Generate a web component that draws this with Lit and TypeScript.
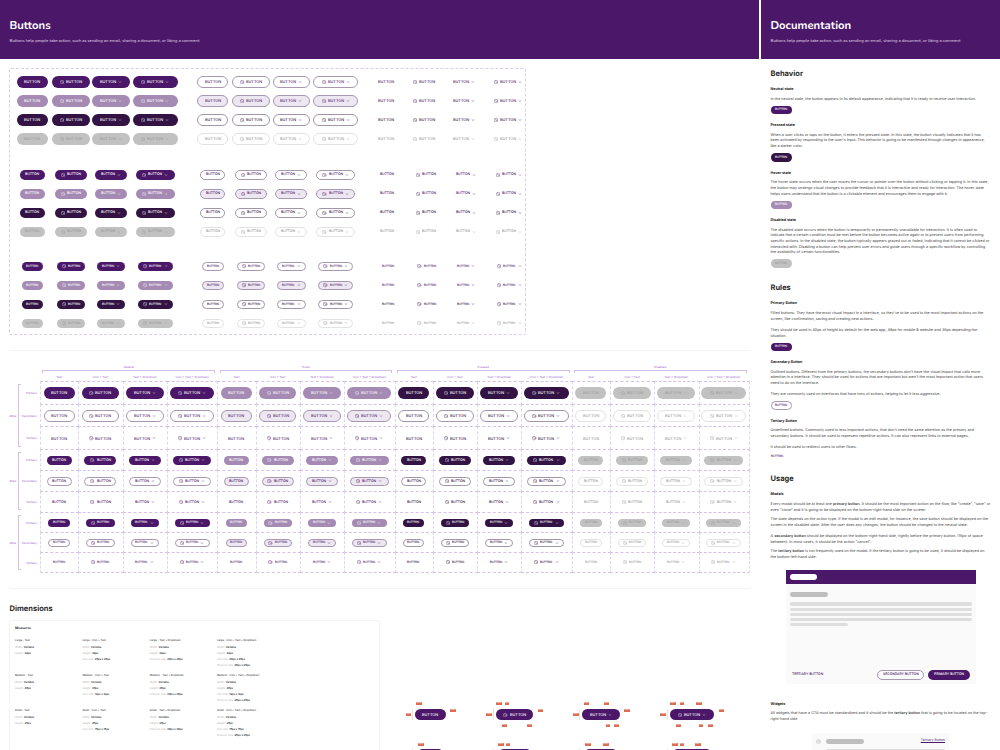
import {css, html, LitElement, nothing, svg} from 'lit';
import {customElement, property} from 'lit/decorators.js';
import {classMap} from 'lit/directives/class-map.js';

type Variant = 'primary' | 'secondary' | 'tertiary';
type Size = 'large' | 'medium' | 'small';
type State = 'neutral' | 'hover' | 'pressed' | 'disabled';

interface Kind {
  label: string;
  icon: boolean;
  chevron: boolean;
}

const VARIANTS: Variant[] = ['primary', 'secondary', 'tertiary'];
const SIZES: Size[] = ['large', 'medium', 'small'];
const STATES: State[] = ['neutral', 'hover', 'pressed', 'disabled'];
const KINDS: Kind[] = [
  {label: 'Text', icon: false, chevron: false},
  {label: 'Icon + Text', icon: true, chevron: false},
  {label: 'Text + Dropdown', icon: false, chevron: true},
  {label: 'Icon + Text + Dropdown', icon: true, chevron: true},
];
const HEIGHTS = {large: '48px', medium: '40px', small: '36px'};
const ICON_SIZES = {large: '20px', medium: '18px', small: '16px'};

const capitalize = (s: string) => s[0].toUpperCase() + s.slice(1);

@customElement('ds-button')
export class DsButton extends LitElement {
  static override styles = css`
    :host {
      display: inline-flex;
      vertical-align: top;
      flex: none;
    }

    .btn {
      display: flex;
      align-items: center;
      justify-content: center;
      box-sizing: border-box;
      border-radius: 6px;
      border: 0 solid transparent;
      font-family: Inter, 'Liberation Sans', sans-serif;
      font-weight: 500;
      line-height: 1;
      white-space: nowrap;
      color: #fff;
    }

    /* keeps the tiny capitals from being snapped to the pixel grid */
    .btn span {
      transform: rotate(0.02deg);
    }

    .large {
      width: 31px;
      height: 11.7px;
      font-size: 3.85px;
      gap: 1.9px;
    }
    .medium {
      width: 25.4px;
      height: 9.7px;
      font-size: 3.35px;
      gap: 2.1px;
    }
    .small {
      width: 21.6px;
      height: 8.7px;
      font-size: 2.95px;
      gap: 2px;
    }
    .large.one {
      width: 37.7px;
    }
    .medium.one {
      width: 32px;
    }
    .small.one {
      width: 28.2px;
    }
    .large.two {
      width: 44.4px;
    }
    .medium.two {
      width: 38.8px;
    }
    .small.two {
      width: 35px;
    }
    .btn.auto {
      width: auto;
      height: 10px;
      padding: 0 5.9px;
    }
    .btn.auto.secondary {
      padding: 0 5px;
    }
    .btn.flush {
      width: auto;
      height: 4.8px;
      padding: 0;
    }

    .primary {
      background: #4b1768;
    }
    .primary.hover {
      background: #a58bb4;
    }
    .primary.pressed {
      background: #321344;
    }
    .primary.disabled {
      background: #c1c1c1;
      color: #9c9c9c;
    }

    .secondary {
      border-width: 1px;
      border-color: #a797b2;
      color: #4b1768;
    }
    .secondary.hover {
      background: #ede7f1;
    }
    .secondary.pressed {
      border-color: #a096a8;
      color: #321344;
    }
    .secondary.disabled {
      border-color: #e2e2e2;
      color: #9a9a9a;
    }

    .tertiary {
      color: #4b1768;
    }
    .tertiary.pressed {
      color: #321344;
    }
    .tertiary.disabled {
      color: #9a9a9a;
    }

    svg {
      display: block;
      flex: none;
      width: 4.2px;
      height: 4.2px;
      fill: none;
      stroke: currentColor;
      stroke-width: 1.7;
      stroke-linecap: round;
      stroke-linejoin: round;
    }
  `;

  @property() variant: Variant = 'primary';
  @property() size: Size = 'large';
  @property() state: State = 'neutral';
  @property() label = 'BUTTON';
  @property({type: Boolean}) icon = false;
  @property({type: Boolean}) chevron = false;
  @property({type: Boolean}) auto = false;
  @property({type: Boolean}) flush = false;

  override render() {
    const extras = Number(this.icon) + Number(this.chevron);
    const classes = {
      btn: true,
      [this.variant]: true,
      [this.size]: true,
      [this.state]: true,
      one: extras === 1,
      two: extras === 2,
      auto: this.auto,
      flush: this.flush,
    };
    return html`<div class=${classMap(classes)}>
      ${this.icon
        ? html`<svg viewBox="0 0 20 20">
            ${svg`<circle cx="10" cy="10" r="8.8" /><path d="M9 5.5v5l4 2.6" />`}
          </svg>`
        : nothing}
      <span>${this.label}</span>
      ${this.chevron
        ? html`<svg viewBox="0 0 20 20">
            ${svg`<path d="M5 8.4l4.6 3.2 4.6-3.2" />`}
          </svg>`
        : nothing}
    </div>`;
  }
}

/** Every size, state and kind of button inside the dashed component frame. */
@customElement('variant-sheet')
export class VariantSheet extends LitElement {
  static override styles = css`
    :host {
      display: block;
    }
    .frame {
      box-sizing: border-box;
      width: 517.4px;
      height: 267px;
      margin-left: -0.5px;
      padding: 3px 0 0 4px;
      border: 1px dashed #dacdea;
      border-radius: 2px;
    }
    .block {
      display: flex;
    }
    .block + .block {
      margin-top: 17px;
    }
    .block + .block + .block {
      margin-top: 15.5px;
    }
    .group {
      display: grid;
      grid-template-columns: 37px 39.8px 40.8px 47.6px;
      grid-auto-rows: 19px;
      align-items: center;
      justify-items: center;
      margin-right: 15.1px;
    }
    .group.tertiary {
      grid-template-columns: 38px 38.6px 41.4px 47px;
      margin: 0 -20px 0 -7.9px;
    }
    .medium .group.tertiary {
      grid-template-columns: 38px 39.6px 39.4px 47.6px;
      margin-left: -6.2px;
    }
    .small .group.tertiary {
      grid-template-columns: 38px 39.4px 39.6px 47.4px;
      margin-left: -5.6px;
    }
  `;

  override render() {
    return html`<div class="frame">
      ${SIZES.map(
        (size) => html`<div class="block ${size}">
          ${VARIANTS.map(
            (variant) => html`<div class="group ${variant}">
              ${STATES.map((state) =>
                KINDS.map(
                  (kind) => html`<ds-button
                    .variant=${variant}
                    .size=${size}
                    .state=${state}
                    .icon=${kind.icon}
                    .chevron=${kind.chevron}
                  ></ds-button>`
                )
              )}
            </div>`
          )}
        </div>`
      )}
    </div>`;
  }
}

@customElement('state-matrix')
export class StateMatrix extends LitElement {
  static override styles = css`
    :host {
      display: flex;
      margin-left: -0.3px;
      font: 500 2.9px/4px Inter, 'Liberation Sans', sans-serif;
      color: #a56fd6;
    }
    .sizes {
      width: 31px;
      padding-top: 16.8px;
    }
    .size {
      display: flex;
      align-items: center;
      height: 67.9px;
    }
    .size.medium {
      height: 63px;
    }
    .size.small {
      height: 60px;
    }
    .name {
      width: 9px;
    }
    .brace {
      box-sizing: border-box;
      width: 3px;
      height: calc(100% - 5px);
      border: 1px solid #d3bde9;
      border-right: 0;
    }
    .variants {
      display: flex;
      flex-direction: column;
      flex: 1;
      height: 100%;
      text-align: right;
      padding-right: 3.4px;
    }
    .variants span {
      flex: 1;
      display: flex;
      align-items: center;
      justify-content: flex-end;
    }
    .states {
      display: grid;
      grid-template-columns: repeat(4, 177.2px);
      text-align: center;
    }
    .state {
      height: 15.9px;
      box-sizing: border-box;
      padding: 0 2.2px;
    }
    .span {
      box-sizing: border-box;
      height: 3px;
      margin: 1.4px 0 1.6px;
      border: 1px solid #d3bde9;
      border-bottom: 0;
    }
    .kinds,
    .cells {
      display: grid;
      grid-template-columns: 38.2px 44.3px 44.3px 50.4px;
    }
    .kinds {
      margin: 0 -2.2px;
    }
    .cells {
      grid-template-rows: repeat(3, 22.63px) repeat(3, 21px) repeat(3, 20px);
    }
    .cell {
      display: flex;
      align-items: center;
      justify-content: center;
      border-left: 1px dashed #e0d3ef;
      border-top: 1px dashed #d6c0e9;
      margin: 0 -1px -1px 0;
      padding-right: 2.2px;
    }
    .cell.last {
      border-right: 1px dashed #e0d3ef;
      padding-right: 1.2px;
    }
    .cell.bottom {
      border-bottom: 1px dashed #d6c0e9;
    }
  `;

  override render() {
    return html`
      <div class="sizes">
        ${SIZES.map(
          (size) => html`<div class="size ${size}">
            <span class="name">${HEIGHTS[size]}</span>
            <div class="brace"></div>
            <div class="variants">
              ${VARIANTS.map((v) => html`<span>${capitalize(v)}</span>`)}
            </div>
          </div>`
        )}
      </div>
      <div class="states">
        ${STATES.map(
          (state, s) => html`<div>
            <div class="state">
              ${capitalize(state)}
              <div class="span"></div>
              <div class="kinds">
                ${KINDS.map((kind) => html`<span>${kind.label}</span>`)}
              </div>
            </div>
            <div class="cells">
              ${SIZES.map((size) =>
                VARIANTS.map((variant) =>
                  KINDS.map(
                    (kind, k) => html`<div
                      class=${classMap({
                        cell: true,
                        last: s === 3 && k === 3,
                        bottom: size === 'small' && variant === 'tertiary',
                      })}
                    >
                      <ds-button
                        .variant=${variant}
                        .size=${size}
                        .state=${state}
                        .icon=${kind.icon}
                        .chevron=${kind.chevron}
                      ></ds-button>
                    </div>`
                  )
                )
              )}
            </div>
          </div>`
        )}
      </div>
    `;
  }
}

// Spacing tags around a specimen, as [x, y, width] from the button's corner.
type Tag = [number, number, number];

const SPECIMENS: {width: number; large: Tag[]; medium: Tag[]}[] = [
  {
    width: 80.7,
    large: [[1, -6.5, 5.6], [-9.3, 4.5, 5.6], [35.3, 0.4, 5.6]],
    medium: [[3, -5.6, 5.6], [32.5, 0.8, 5.6]],
  },
  {
    width: 86.6,
    large: [[0.3, -6.5, 5.6], [9.3, -6.5, 4.2], [-9.3, 4.5, 5.6], [42, 0.4, 5.6], [6, 15.6, 5.6], [31, 15.6, 5.6]],
    medium: [[2.3, -5.6, 5.6], [10, -5.6, 4.2], [39, 0.8, 5.6]],
  },
  {
    width: 87.4,
    large: [[1.3, -6.5, 5.3], [21.3, -6.5, 5.6], [-9.3, 4.5, 5.6], [42, 0.4, 5.6], [23.3, 15.6, 4.2], [31.6, 15.6, 5.6]],
    medium: [[3, -5.6, 5.6], [20.7, -5.6, 5.6], [39.3, 0.8, 5.6]],
  },
  {
    width: 60,
    large: [[0.3, -6.5, 5.6], [10, -6.5, 4.2], [26.6, -6.5, 5.6], [-9.3, 4.5, 5.6], [49, 0.4, 5.6], [6, 15.6, 5.6], [29.3, 15.6, 4.2], [38, 15.6, 5.6]],
    medium: [[2.3, -5.6, 5.6], [10, -5.6, 4.2], [25.3, -5.6, 5.6], [46, 0.8, 5.6]],
  },
];

@customElement('dimension-board')
export class DimensionBoard extends LitElement {
  static override styles = css`
    :host {
      display: flex;
      margin-left: -0.5px;
      font: 400 2.6px/6px Inter, 'Liberation Sans', sans-serif;
      color: #b4b4b4;
    }
    .measures {
      box-sizing: border-box;
      width: 371px;
      height: 160px;
      padding: 4.6px 0 0 5px;
      border: 1px solid #f3f3f3;
      border-radius: 2px;
    }
    .title {
      font-size: 3.3px;
      font-weight: 700;
      color: #333;
    }
    .specs {
      display: grid;
      grid-template-columns: 67.4px 67.4px 67.2px 80px;
      grid-auto-rows: 35.3px;
      margin-top: 5.3px;
    }
    .name {
      font-weight: 500;
      color: #444;
      margin-bottom: 0.9px;
    }
    b {
      font-weight: 600;
      color: #333;
    }
    .specimens {
      padding: 89px 0 0 35px;
    }
    .line {
      display: flex;
      height: 40px;
    }
    .line.medium ds-button {
      margin-left: 3px;
    }
    .specimen {
      position: relative;
    }
    .guide {
      position: absolute;
      left: -3px;
      top: 0;
      width: 1px;
      height: 11.7px;
      background: #f6dfd9;
    }
    .tag {
      position: absolute;
      height: 2.8px;
      background: #de6b50;
      border-radius: 0.5px;
      color: #fff;
      font-size: 2px;
      line-height: 2.8px;
      text-align: center;
    }
  `;

  private renderSpec(size: Size, kind: Kind) {
    const icon = ICON_SIZES[size];
    return html`<div>
      <div class="name">${capitalize(size)} - ${kind.label}</div>
      <div>Width: <b>Variable</b></div>
      <div>Height: <b>${HEIGHTS[size]}</b></div>
      ${kind.icon ? html`<div>Icon size: <b>${icon} x ${icon}</b></div>` : nothing}
      ${kind.chevron ? html`<div>Chevron size: <b>20px x 20px</b></div>` : nothing}
    </div>`;
  }

  private renderLine(size: 'large' | 'medium') {
    return html`<div class="line ${size}">
      ${SPECIMENS.map(
        (specimen, i) => html`<div
          class="specimen"
          style="width: ${specimen.width}px"
        >
          <div class="guide"></div>
          <ds-button
            .size=${size}
            .label=${size === 'large' ? 'BUTTON' : ''}
            .icon=${KINDS[i].icon}
            .chevron=${KINDS[i].chevron}
          ></ds-button>
          ${specimen[size].map(
            ([x, y, w]) => html`<span
              class="tag"
              style="left: ${x}px; top: ${y}px; width: ${w}px"
              >${y > 0 && y < 1 && size === 'medium'
                ? nothing
                : w > 5
                  ? '24px'
                  : '8px'}</span
            >`
          )}
        </div>`
      )}
    </div>`;
  }

  override render() {
    return html`
      <div class="measures">
        <div class="title">Measures</div>
        <div class="specs">
          ${SIZES.map((size) => KINDS.map((kind) => this.renderSpec(size, kind)))}
        </div>
      </div>
      <div class="specimens">
        ${this.renderLine('large')} ${this.renderLine('medium')}
      </div>
    `;
  }
}

@customElement('doc-panel')
export class DocPanel extends LitElement {
  static override styles = css`
    :host {
      display: block;
      padding: 9.4px 0 0 9.5px;
      font: 400 3.73px/5.7px Inter, 'Liberation Sans', sans-serif;
      color: #3c3c3c;
      white-space: nowrap;
    }
    h2 {
      margin: 0 0 7.3px;
      font-size: 7.5px;
      line-height: 10px;
      font-weight: 700;
      color: #2b2b2b;
    }
    h3 {
      margin: 0 0 3.9px;
      font-size: 3.65px;
      line-height: 5.7px;
      font-weight: 700;
      color: #222;
    }
    p {
      margin: 0;
    }
    .blank {
      margin-top: 5.6px;
    }
    .near {
      margin-top: 3.7px;
    }
    b {
      font-weight: 600;
      color: #333;
    }
    ds-button {
      display: flex;
      margin: 4.3px 0 7.8px;
    }
    .end {
      margin-bottom: 14.8px;
    }
    .modal {
      width: 190px;
      height: 114.3px;
      margin: 10.6px 0 16.3px 15px;
      display: flex;
      flex-direction: column;
      background: #fafafa;
    }
    .bar {
      height: 13.6px;
      display: flex;
      align-items: center;
      padding-left: 4px;
      background: #4b1768;
    }
    .bar i {
      width: 27px;
      height: 6px;
      border-radius: 3px;
      background: #fff;
    }
    .body {
      flex: 1;
      padding: 8.4px 4px 0;
    }
    .body i,
    .widget i {
      display: block;
      height: 3.2px;
      margin-bottom: 2px;
      border-radius: 1.6px;
      background: #dedede;
    }
    .body .heading,
    .row .heading {
      width: 38px;
      height: 4.8px;
      margin-bottom: 5.5px;
      border-radius: 2.4px;
      background: #bfbfbf;
    }
    .body .short {
      width: 58.5px;
    }
    .actions {
      display: flex;
      align-items: center;
      padding: 0 5.5px 4.8px 6px;
    }
    .actions ds-button {
      margin: 0 0 0 4px;
    }
    .actions ds-button.left {
      margin: 0 auto 0 0;
    }
    .widget {
      box-sizing: border-box;
      width: 137px;
      height: 40px;
      margin: 11.6px 0 0 41.6px;
      padding: 5.4px 4px;
      background: #fafafa;
    }
    .row {
      display: flex;
      align-items: center;
      height: 5.4px;
    }
    .row .dot {
      width: 5.4px;
      height: 5.4px;
      margin: 0 4.2px 0 0;
      border-radius: 50%;
    }
    .row .heading {
      margin: 0 auto 0 0;
    }
    .row a {
      color: #4b1768;
      font-size: 3.5px;
      text-decoration: underline;
    }
    .widget .full {
      margin: 4.8px 0 0 9.6px;
    }
  `;

  override render() {
    return html`
      <h2>Behavior</h2>
      <h3>Neutral state</h3>
      <p>In the neutral state, the button appears in its default appearance, indicating that it is ready to receive user interaction.</p>
      <ds-button size="small"></ds-button>
      <h3>Pressed state</h3>
      <p>
        When a user clicks or taps on the button, it enters the pressed state. In this state, the button visually indicates that it has<br />
        been activated by responding to the user's input. This behavior is going to be manifested through changes in appearance,<br />
        like a darker color.
      </p>
      <ds-button size="small" state="pressed"></ds-button>
      <h3>Hover state</h3>
      <p>
        The hover state occurs when the user moves the cursor or pointer over the button without clicking or tapping it. In this state,<br />
        the button may undergo visual changes to provide feedback that it is interactive and ready for interaction. The hover state<br />
        helps users understand that the button is a clickable element and encourages them to engage with it.
      </p>
      <ds-button size="small" state="hover"></ds-button>
      <h3>Disabled state</h3>
      <p>
        The disabled state occurs when the button is temporarily or permanently unavailable for interaction. It is often used to<br />
        indicate that a certain condition must be met before the button becomes active again or to prevent users from performing<br />
        specific actions. In the disabled state, the button typically appears grayed out or faded, indicating that it cannot be clicked or<br />
        interacted with. Disabling a button can help prevent user errors and guide users through a specific workflow by controlling<br />
        the availability of certain functionalities.
      </p>
      <ds-button class="end" size="small" state="disabled"></ds-button>

      <h2>Rules</h2>
      <h3>Primary Button</h3>
      <p>
        Filled buttons. They have the most visual impact in a interface, so they've to be used to the most important actions on the<br />
        screen, like confirmation, saving and creating new actions.
      </p>
      <p class="blank">
        They should be used in 40px of height by default for the web app, 48px for mobile &amp; website and 36px depending the<br />
        situation.
      </p>
      <ds-button size="small"></ds-button>
      <h3>Secondary Button</h3>
      <p>
        Outlined buttons. Different from the primary buttons, the secondary buttons don't have the visual impact that calls more<br />
        attention in a interface. They should be used for actions that are important but aren't the most important action that users<br />
        need to do on the interface.
      </p>
      <p class="blank">They are commonly used on interfaces that have tons of actions, helping to let it less aggressive.</p>
      <ds-button size="small" variant="secondary"></ds-button>
      <h3>Tertiary Button</h3>
      <p>
        Undefined buttons. Commonly used to less important actions, that don't need the same attention as the primary and<br />
        secondary buttons. It should be used to represent repetitive actions. It can also represent links to external pages.
      </p>
      <p class="blank">It should be used to redirect users to other flows.</p>
      <ds-button class="end" size="small" variant="tertiary" flush></ds-button>

      <h2>Usage</h2>
      <h3>Modals</h3>
      <p>
        Every modal should be at least one <b>primary button</b>. It should be the most important action on the flow, like "create", "save" or<br />
        even "close" and it is going to be displayed on the bottom-right-hand side on the screen
      </p>
      <p class="near">
        The state depends on the action type. If the modal is an edit modal, for instance, the save button should be displayed on the<br />
        screen in the disabled state. After the user does any changes, the button should be changed to the neutral state.
      </p>
      <p class="blank">
        A <b>secondary button</b> should be displayed on the bottom-right-hand side, rightly before the primary button. (16px of space<br />
        between). In most cases, it should be the action "cancel".
      </p>
      <p class="near">
        The <b>tertiary button</b> is not frequently used on the modal. If the tertiary button is going to be used, it should be displayed on<br />
        the bottom-left-hand side.
      </p>
      <div class="modal">
        <div class="bar"><i></i></div>
        <div class="body">
          <i class="heading"></i>
          <i></i><i></i><i></i><i></i><i class="short"></i>
        </div>
        <div class="actions">
          <ds-button class="left" size="medium" variant="tertiary" label="TERTIARY BUTTON" flush></ds-button>
          <ds-button size="medium" variant="secondary" label="SECONDARY BUTTON" auto></ds-button>
          <ds-button size="medium" label="PRIMARY BUTTON" auto></ds-button>
        </div>
      </div>
      <h3>Widgets</h3>
      <p>
        All widgets that have a CTA must be standardized and it should be the <b>tertiary button</b> that is going to be located on the top-<br />
        right-hand side
      </p>
      <div class="widget">
        <div class="row">
          <i class="dot"></i><i class="heading"></i><a>Tertiary Button</a>
        </div>
        <i class="full"></i>
      </div>
    `;
  }
}

@customElement('app-root')
export class AppRoot extends LitElement {
  static override styles = css`
    :host {
      display: grid;
      grid-template-columns: 759px 239px;
      gap: 2px;
      height: 750px;
      overflow: hidden;
      background: #fff;
      text-rendering: geometricPrecision;
    }
    .page {
      min-width: 0;
    }
    .hero {
      box-sizing: border-box;
      height: 59.3px;
      padding: 18.4px 0 0 9.5px;
      background: #4b1768;
      color: #fff;
      font-family: Nunito, 'Open Sans', sans-serif;
    }
    h1 {
      margin: 0;
      font-size: 11.3px;
      line-height: 15px;
      font-weight: 700;
    }
    .hero p {
      margin: 4.3px 0 0;
      font-size: 4.27px;
      line-height: 6px;
      color: #e4dae9;
    }
    .content {
      padding: 9.2px 9.5px 0;
    }
    .rule {
      height: 1px;
      background: #f3f3f3;
    }
    .rule.first {
      margin: 14.5px 0 14.1px;
    }
    .rule.second {
      margin: 15px 0 15.2px;
    }
    h2 {
      margin: 0 0 5.8px;
      font: 700 7.5px/10px Inter, 'Liberation Sans', sans-serif;
      color: #2b2b2b;
    }
  `;

  private renderHero(title: string) {
    return html`<header class="hero">
      <h1>${title}</h1>
      <p>Buttons help people take action, such as sending an email, sharing a document, or liking a comment</p>
    </header>`;
  }

  override render() {
    return html`
      <main class="page">
        ${this.renderHero('Buttons')}
        <div class="content">
          <variant-sheet></variant-sheet>
          <div class="rule first"></div>
          <state-matrix></state-matrix>
          <div class="rule second"></div>
          <h2>Dimensions</h2>
          <dimension-board></dimension-board>
        </div>
      </main>
      <aside class="page">
        ${this.renderHero('Documentation')}
        <doc-panel></doc-panel>
      </aside>
    `;
  }
}

declare global {
  interface HTMLElementTagNameMap {
    'ds-button': DsButton;
    'variant-sheet': VariantSheet;
    'state-matrix': StateMatrix;
    'dimension-board': DimensionBoard;
    'doc-panel': DocPanel;
    'app-root': AppRoot;
  }
}
